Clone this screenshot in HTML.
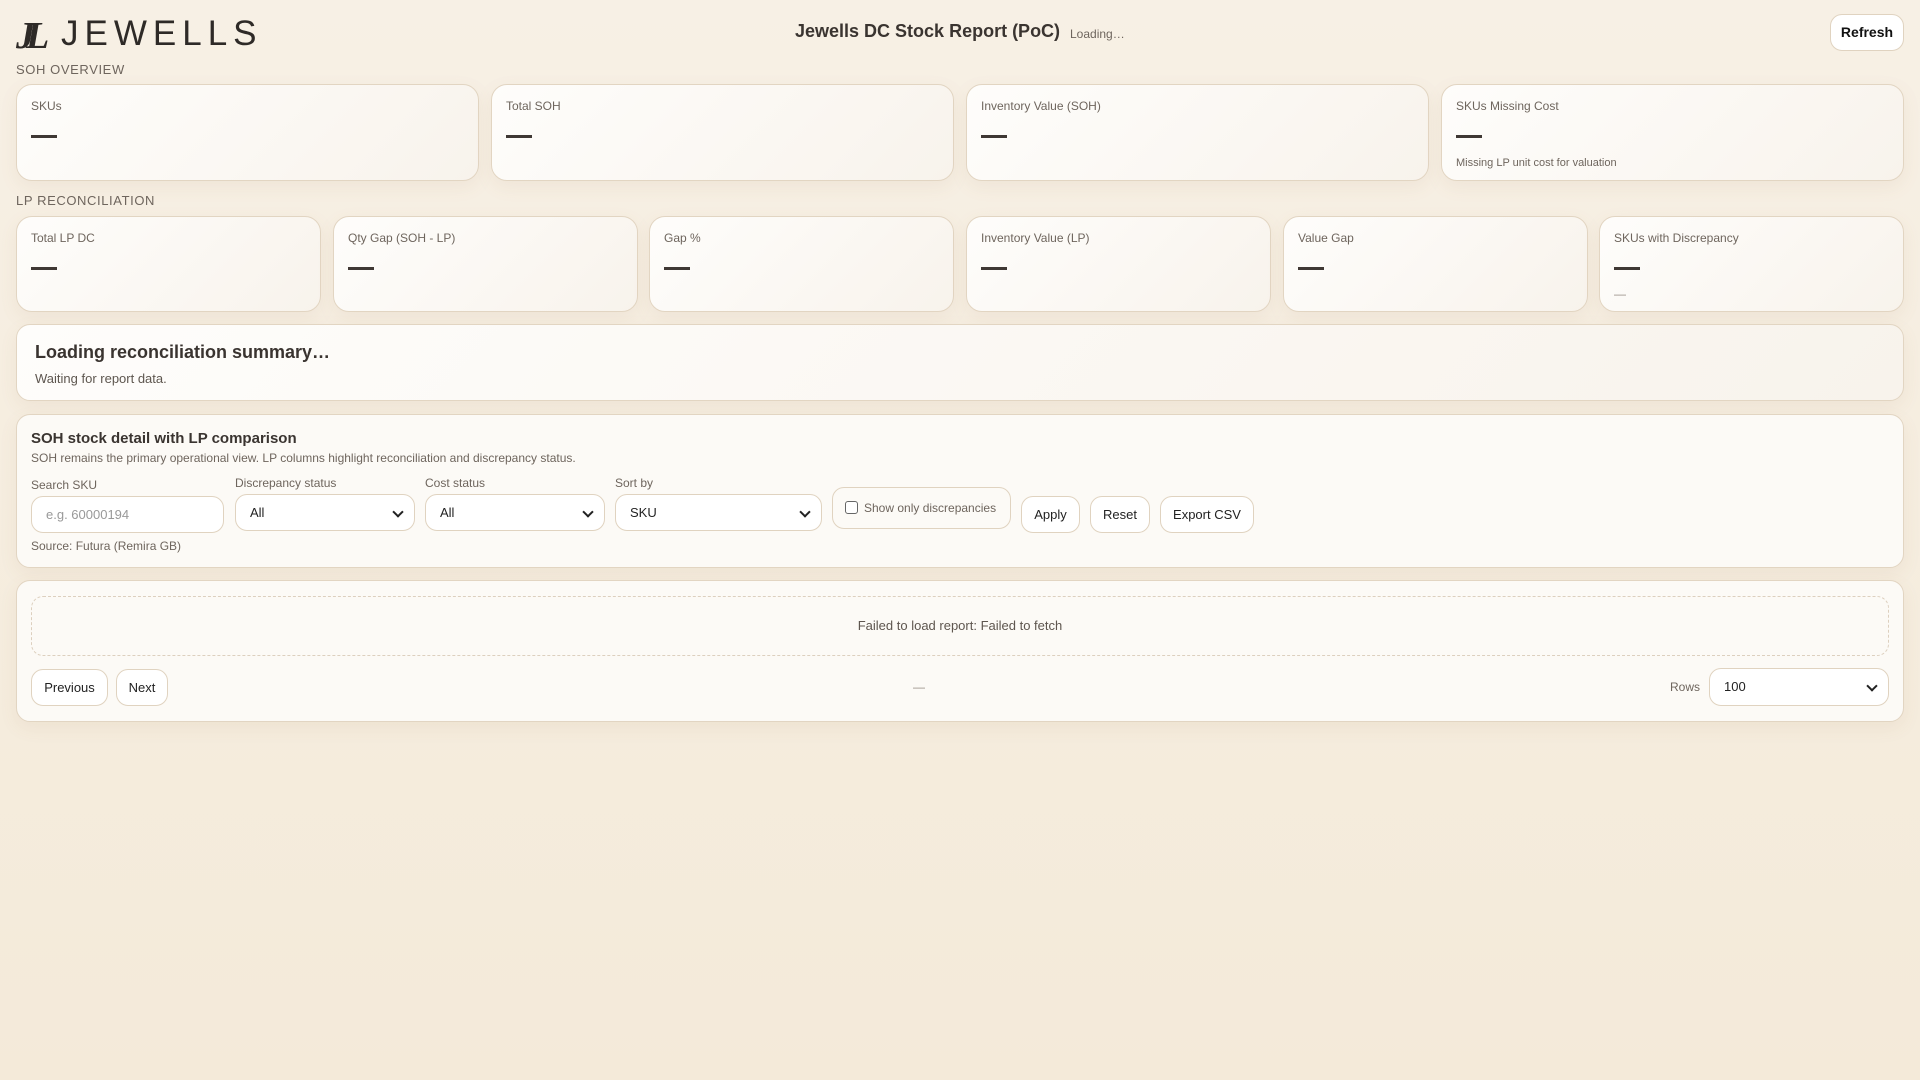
<!DOCTYPE html>
<html><head><meta charset="utf-8"><style>
*{box-sizing:border-box;margin:0;padding:0}
body{width:1920px;height:1080px;overflow:hidden;background:linear-gradient(180deg,#f7f0e5,#f4ead9);font-family:"Liberation Sans",sans-serif;color:#3a3430;position:relative}
.a{position:absolute}
.card{position:absolute;background:linear-gradient(135deg,#fefdfb,#f8f3ec);border:1px solid #e2d5c2;border-radius:16px;box-shadow:0 6px 18px rgba(150,120,80,.08)}
.lbl{position:absolute;left:14px;top:14px;font-size:12px;color:#6e655d}
.dash{position:absolute;left:14px;width:26px;height:3px;background:#3f3834;top:50px}
.sec{position:absolute;left:16px;font-size:13px;letter-spacing:.6px;color:#6e655d}
.fl{position:absolute;font-size:12px;color:#6e655d}
.inp{position:absolute;height:37px;border:1px solid #e0d3c0;border-radius:12px;background:#fff;font-size:13px;padding-left:14px;line-height:35px;color:#222}
.sel::after{content:"";position:absolute;right:12px;top:13px;width:6px;height:6px;border-right:2px solid #222;border-bottom:2px solid #222;transform:rotate(45deg)}
.btn{position:absolute;height:37px;border:1px solid #e0d3c0;border-radius:12px;background:#fff;font-size:13px;line-height:35px;text-align:center;color:#222}
</style></head><body>
<div class="a" style="left:16px;top:14px;font-family:'Liberation Serif',serif;font-weight:bold;font-style:italic;font-size:38px;letter-spacing:-9px;color:#2e2a27">JL</div>
<div class="a" style="left:61px;top:14px;font-size:35px;letter-spacing:6px;color:#2e2a27">JEWELLS</div>
<div class="a" style="left:795px;top:21px;font-size:18px;font-weight:bold;color:#3a3430">Jewells DC Stock Report (PoC)</div>
<div class="a" style="left:1070px;top:27px;font-size:12px;color:#6e655d">Loading…</div>
<div class="btn" style="left:1830px;top:14px;width:74px;height:37px;font-weight:bold;font-size:14px;color:#111">Refresh</div>

<div class="sec" style="top:62px">SOH OVERVIEW</div>
<div class="card" style="left:16px;top:84px;width:463px;height:97px"><div class="lbl">SKUs</div><div class="dash"></div></div>
<div class="card" style="left:491px;top:84px;width:463px;height:97px"><div class="lbl">Total SOH</div><div class="dash"></div></div>
<div class="card" style="left:966px;top:84px;width:463px;height:97px"><div class="lbl">Inventory Value (SOH)</div><div class="dash"></div></div>
<div class="card" style="left:1441px;top:84px;width:463px;height:97px"><div class="lbl">SKUs Missing Cost</div><div class="dash"></div><div class="a" style="left:14px;top:72px;font-size:11px;color:#6e655d">Missing LP unit cost for valuation</div></div>

<div class="sec" style="top:193px">LP RECONCILIATION</div>
<div class="card" style="left:16px;top:216px;width:305px;height:96px"><div class="lbl">Total LP DC</div><div class="dash"></div></div>
<div class="card" style="left:333px;top:216px;width:305px;height:96px"><div class="lbl">Qty Gap (SOH - LP)</div><div class="dash"></div></div>
<div class="card" style="left:649px;top:216px;width:305px;height:96px"><div class="lbl">Gap %</div><div class="dash"></div></div>
<div class="card" style="left:966px;top:216px;width:305px;height:96px"><div class="lbl">Inventory Value (LP)</div><div class="dash"></div></div>
<div class="card" style="left:1283px;top:216px;width:305px;height:96px"><div class="lbl">Value Gap</div><div class="dash"></div></div>
<div class="card" style="left:1599px;top:216px;width:305px;height:96px"><div class="lbl">SKUs with Discrepancy</div><div class="dash"></div><div class="a" style="left:14px;top:70px;font-size:12px;color:#9a9088">—</div></div>

<div class="card" style="left:16px;top:324px;width:1888px;height:77px;border-radius:14px">
<div class="a" style="left:18px;top:17px;font-size:18px;font-weight:bold;color:#3a3430">Loading reconciliation summary…</div>
<div class="a" style="left:18px;top:46px;font-size:13px;color:#5e564f">Waiting for report data.</div></div>

<div class="card" style="left:16px;top:414px;width:1888px;height:154px;border-radius:14px;background:#fcfaf6">
<div class="a" style="left:14px;top:15px;font-size:15px;font-weight:bold;color:#3a3430">SOH stock detail with LP comparison</div>
<div class="a" style="left:14px;top:36px;font-size:12px;color:#6e655d">SOH remains the primary operational view. LP columns highlight reconciliation and discrepancy status.</div>
</div>
<div class="fl" style="left:31px;top:478px">Search SKU</div>
<div class="inp" style="left:31px;top:496px;width:193px;color:#999">e.g. 60000194</div>
<div class="fl" style="left:235px;top:476px">Discrepancy status</div>
<div class="inp sel" style="left:235px;top:494px;width:180px">All</div>
<div class="fl" style="left:425px;top:476px">Cost status</div>
<div class="inp sel" style="left:425px;top:494px;width:180px">All</div>
<div class="fl" style="left:615px;top:476px">Sort by</div>
<div class="inp sel" style="left:615px;top:494px;width:207px">SKU</div>
<div class="a" style="left:832px;top:487px;width:179px;height:42px;border:1px solid #e0d3c0;border-radius:12px;font-size:12px;color:#6e655d;line-height:40px;padding-left:12px"><span style="display:inline-block;width:13px;height:13px;border:1px solid #666;border-radius:3px;vertical-align:-2px;margin-right:6px;background:#fff"></span>Show only discrepancies</div>
<div class="btn" style="left:1021px;top:496px;width:59px">Apply</div>
<div class="btn" style="left:1090px;top:496px;width:60px">Reset</div>
<div class="btn" style="left:1160px;top:496px;width:94px">Export CSV</div>
<div class="fl" style="left:31px;top:539px;font-size:12px">Source: Futura (Remira GB)</div>

<div class="card" style="left:16px;top:580px;width:1888px;height:142px;border-radius:14px;background:#fcfaf6">
<div class="a" style="left:14px;top:15px;width:1858px;height:60px;border:1px dashed #ddd0bf;border-radius:12px;text-align:center;line-height:58px;font-size:13px;color:#5e564f">Failed to load report: Failed to fetch</div>
</div>
<div class="btn" style="left:31px;top:669px;width:77px">Previous</div>
<div class="btn" style="left:116px;top:669px;width:52px">Next</div>
<div class="a" style="left:913px;top:680px;font-size:12px;color:#9a9088">—</div>
<div class="a" style="left:1670px;top:680px;font-size:12px;color:#6e655d">Rows</div>
<div class="inp sel" style="left:1709px;top:668px;width:180px;height:38px">100</div>
</body></html>
